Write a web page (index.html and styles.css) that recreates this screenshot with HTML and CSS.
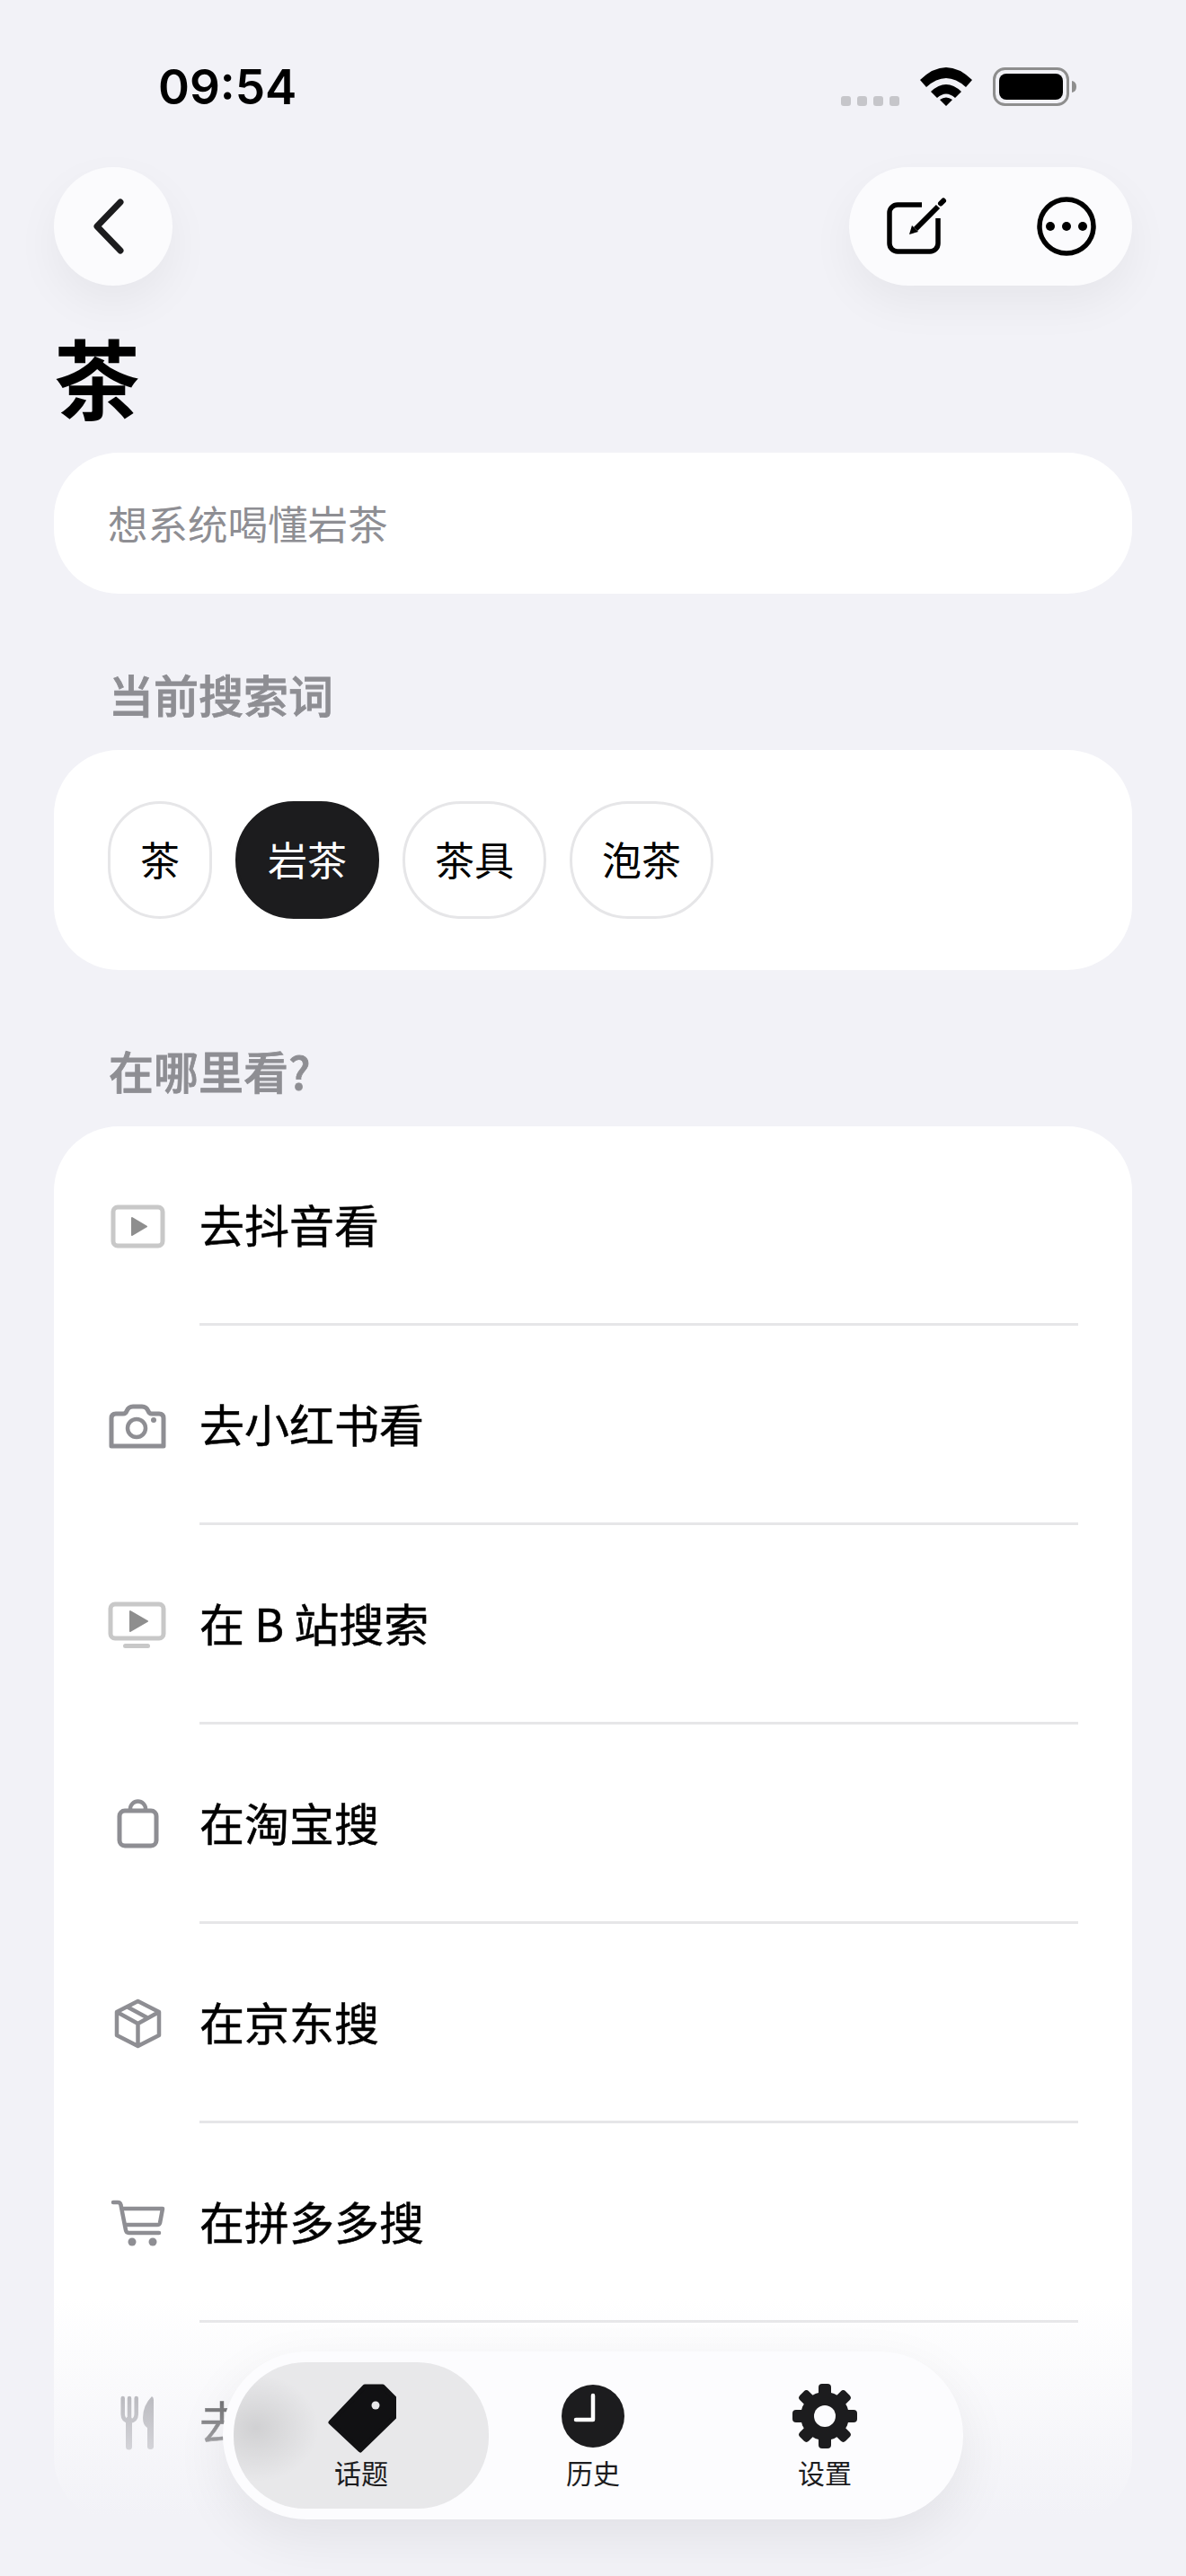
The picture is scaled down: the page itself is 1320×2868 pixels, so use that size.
FILE: index.html
```html
<!DOCTYPE html>
<html lang="zh-CN">
<head>
  <meta charset="UTF-8">
  <meta name="viewport" content="width=device-width, initial-scale=1.0">
  <title>茶</title>
  <link rel="stylesheet" href="styles.css">
</head>
<body>
  <div class="screen">
    <div class="status">
      <span class="time">09:54</span>
      <div class="status-icons">
        <div class="signal"><i></i><i></i><i></i><i></i></div>
        <svg class="wifi" width="58" height="43" viewBox="0 0 58 43">
          <path d="M0 14 Q29 -14 58 14 L51 22 Q29 2 7 22 Z M12 27 Q29 11 46 27 L39 34 Q29 25 19 34 Z M22 36 Q29 31 36 36 L29 43 Z" fill="#000"/>
        </svg>
        <svg class="battery" width="93" height="43" viewBox="0 0 93 43">
          <rect x="1.500" y="1.500" width="82" height="40" rx="12" fill="none" stroke="#8e8e8e" stroke-width="3"/>
          <rect x="7" y="7" width="71" height="29" rx="8" fill="#000"/>
          <path d="M88 15 q5 1 5 6.500 t-5 6.500 z" fill="#8e8e8e"/>
        </svg>
      </div>
    </div>

    <main class="content">
      <div class="nav">
        <button class="round-btn">
          <svg width="36" height="62" viewBox="0 0 36 62"><path d="M31 4 L5 31 L31 58" fill="none" stroke="#1c1c1e" stroke-width="7" stroke-linecap="round" stroke-linejoin="round"/></svg>
        </button>
        <div class="action-pill">
          <svg width="72" height="72" viewBox="0 0 72 72">
            <path d="M41 12 H14 a9 9 0 0 0 -9 9 V55 a9 9 0 0 0 9 9 H50 a9 9 0 0 0 9 -9 V27" fill="none" stroke="#000" stroke-width="5.500"/>
            <path d="M34 39 L59 14" stroke="#000" stroke-width="6"/>
            <path d="M62 10.500 L65 7.500" stroke="#000" stroke-width="6" stroke-linecap="round"/>
            <path d="M27 45 L30 35 L37 42 Z" fill="#000"/>
          </svg>
          <svg width="72" height="72" viewBox="0 0 72 72">
            <circle cx="36" cy="36" r="30" fill="none" stroke="#000" stroke-width="5.500"/>
            <circle cx="18" cy="36" r="5" fill="#000"/>
            <circle cx="36" cy="36" r="5" fill="#000"/>
            <circle cx="54" cy="36" r="5" fill="#000"/>
          </svg>
        </div>
      </div>

      <h1 class="title">茶</h1>

      <div class="search">想系统喝懂岩茶</div>

      <h2 class="section-label">当前搜索词</h2>
      <div class="card chips">
        <span class="chip">茶</span>
        <span class="chip active">岩茶</span>
        <span class="chip">茶具</span>
        <span class="chip">泡茶</span>
      </div>

      <h2 class="section-label">在哪里看?</h2>
      <div class="card list">
        <div class="row">
          <svg class="row-icon" viewBox="0 0 66 66">
            <rect x="6" y="12" width="55" height="43" rx="5" fill="none" stroke="#c8c8c8" stroke-width="5"/>
            <path d="M27 24 L43 33.500 L27 43 Z" fill="#8e8e8e" stroke="#8e8e8e" stroke-width="2" stroke-linejoin="round"/>
          </svg>
          <span class="row-text">去抖音看</span>
        </div>
        <div class="row">
          <svg class="row-icon" viewBox="0 0 66 66">
            <path d="M9 20 H17 Q20 20 21 17 Q23 12 28 12 H38 Q43 12 45 17 Q46 20 49 20 H57 Q62 20 62 25 V56 H4 V25 Q4 20 9 20 Z" fill="none" stroke="#8e8e93" stroke-width="5" stroke-linejoin="round"/>
            <circle cx="32" cy="36" r="10" fill="none" stroke="#8e8e93" stroke-width="4.500"/>
            <circle cx="51" cy="27" r="3" fill="#8e8e93"/>
          </svg>
          <span class="row-text">去小红书看</span>
        </div>
        <div class="row">
          <svg class="row-icon" viewBox="0 0 66 66">
            <rect x="3" y="10" width="59" height="38" rx="5" fill="none" stroke="#c8c8c8" stroke-width="5"/>
            <path d="M25 18 L44 29 L25 40 Z" fill="#8e8e8e" stroke="#8e8e8e" stroke-width="2" stroke-linejoin="round"/>
            <rect x="17" y="54" width="30" height="5" rx="2.500" fill="#c8c8c8"/>
          </svg>
          <span class="row-text">在 B 站搜索</span>
        </div>
        <div class="row">
          <svg class="row-icon" viewBox="0 0 66 66">
            <rect x="13" y="18" width="41" height="39" rx="6" fill="none" stroke="#8e8e93" stroke-width="5"/>
            <path d="M25 18 V16 a8.500 8.500 0 0 1 17 0 V18" fill="none" stroke="#8e8e93" stroke-width="4.500"/>
          </svg>
          <span class="row-text">在淘宝搜</span>
        </div>
        <div class="row">
          <svg class="row-icon" viewBox="0 0 66 66">
            <path d="M33.500 8 L57 20 V46 L33.500 58 L10 46 V20 Z M10 20 L33.500 33 L57 20 M33.500 33 V58 M21 14 L45 27" fill="none" stroke="#8e8e93" stroke-width="4.500" stroke-linejoin="round"/>
          </svg>
          <span class="row-text">在京东搜</span>
        </div>
        <div class="row">
          <svg class="row-icon" viewBox="0 0 66 66">
            <path d="M6 10 H11 Q14 10 14.500 13 L20 41 Q20.500 44 23.500 44 H57" fill="none" stroke="#8e8e93" stroke-width="4.500" stroke-linecap="round"/>
            <path d="M16 17 H61 L58 33 Q57.500 35 55 35 H19" fill="none" stroke="#8e8e93" stroke-width="4.500" stroke-linejoin="round"/>
            <circle cx="27" cy="54" r="4.500" fill="#8e8e93"/>
            <circle cx="50" cy="54" r="4.500" fill="#8e8e93"/>
          </svg>
          <span class="row-text">在拼多多搜</span>
        </div>
        <div class="row">
          <svg class="row-icon" viewBox="0 0 66 66">
            <path d="M16.700 6 V24 Q16.700 31 24 32 Q31.700 31 31.700 24 V6 M24 6 V32" fill="none" stroke="#8e8e93" stroke-width="4.500" stroke-linecap="round"/>
            <path d="M23.500 30 V60" fill="none" stroke="#8e8e93" stroke-width="7" stroke-linecap="round"/>
            <path d="M49 4 Q51 5 51 8 V60 Q51 63 47.500 63 Q44 63 44 60 V39 Q39 36 39 28 Q39 14 49 4 Z" fill="#8e8e93"/>
          </svg>
          <span class="row-text">去点评看</span>
        </div>
      </div>
    </main>

    <div class="fade"></div>

    <nav class="tabbar">
      <div class="tab active">
        <svg width="78" height="78" viewBox="-2 0 78 78">
          <path d="M41 3 H61 L75 17 V36 L36 74 L3 43 Z" fill="#111113" stroke="#111113" stroke-width="5" stroke-linejoin="round"/>
          <circle cx="53" cy="24" r="4.500" fill="#e8e8ea"/>
        </svg>
        <span>话题</span>
      </div>
      <div class="tab">
        <svg width="78" height="78" viewBox="0 0 78 78">
          <circle cx="39" cy="36" r="35" fill="#1c1c1e"/>
          <path d="M39 13 V40 H20" fill="none" stroke="#fff" stroke-width="4.500" stroke-linecap="round" stroke-linejoin="round"/>
        </svg>
        <span>历史</span>
      </div>
      <div class="tab">
        <svg width="78" height="78" viewBox="0 0 78 78">
          <g fill="#1c1c1e">
            <circle cx="39" cy="36" r="27"/>
            <rect x="32" y="0" width="14" height="72" rx="4"/>
            <rect x="32" y="0" width="14" height="72" rx="4" transform="rotate(45 39 36)"/>
            <rect x="32" y="0" width="14" height="72" rx="4" transform="rotate(90 39 36)"/>
            <rect x="32" y="0" width="14" height="72" rx="4" transform="rotate(135 39 36)"/>
          </g>
          <circle cx="39" cy="36" r="12" fill="#fcfcfe"/>
        </svg>
        <span>设置</span>
      </div>
    </nav>
  </div>
</body>
</html>
```

FILE: styles.css
```css
* {
  box-sizing: border-box;
}

body {
  margin: 0;
  background-color: #f2f2f7;
  font-family: "Noto Sans CJK SC", "Liberation Sans", sans-serif;
  color: #000;
}

.screen {
  position: relative;
  width: 1320px;
  height: 2868px;
  overflow: hidden;
}

/* status bar */
.status {
  display: flex;
  justify-content: space-between;
  align-items: flex-start;
  height: 186px;
  padding: 64px 122px 0 176px;
}

.time {
  font-family: Inter, "Liberation Sans", sans-serif;
  font-size: 53px;
  font-weight: 600;
  line-height: 66px;
}

.status-icons {
  display: flex;
  align-items: flex-end;
  gap: 23px;
  margin-top: 11px;
}

.signal {
  display: flex;
  gap: 7px;
}

.signal i {
  width: 11px;
  height: 11px;
  border-radius: 3px;
  background-color: #c6c6ca;
}

/* content */
.content {
  padding: 0 60px;
}

.nav {
  display: flex;
  justify-content: space-between;
}

.round-btn {
  display: flex;
  align-items: center;
  justify-content: center;
  width: 132px;
  height: 132px;
  padding: 0 10px 0 0;
  border: none;
  border-radius: 50%;
  background-color: #fbfbfd;
  box-shadow: 0 20px 50px rgba(0, 0, 0, 0.05);
}

.action-pill {
  display: flex;
  align-items: center;
  justify-content: space-between;
  width: 315px;
  height: 132px;
  padding: 0 37px 0 40px;
  border-radius: 66px;
  background-color: #fbfbfd;
  box-shadow: 0 20px 50px rgba(0, 0, 0, 0.05);
}

.title {
  margin: 52px 0 38px 0;
  font-size: 96px;
  font-weight: 700;
  line-height: 96px;
}

.search {
  display: flex;
  align-items: center;
  height: 157px;
  padding: 0 0 3px 60px;
  border-radius: 72px;
  background-color: #fff;
  font-size: 44.5px;
  color: #8e8e93;
}

.section-label {
  margin: 81px 0 33px 61px;
  font-size: 50px;
  font-weight: 500;
  line-height: 60px;
  color: #8e8e93;
  -webkit-text-stroke: 0.8px #8e8e93;
}

.card {
  border-radius: 72px;
  background-color: #fff;
}

.chips {
  display: flex;
  gap: 26px;
  height: 245px;
  padding: 57px 60px;
}

.chip {
  display: flex;
  align-items: center;
  height: 131px;
  padding: 0 33px 3px;
  border: 3px solid #e6e6e8;
  border-radius: 65px;
  font-size: 44px;
}

.chip.active {
  border-color: #1c1c1e;
  background-color: #1c1c1e;
  color: #fff;
}

.list {
  padding: 0 60px;
}

.row {
  display: flex;
  align-items: center;
  gap: 36px;
  height: 222px;
}

.row-icon {
  flex: none;
  width: 66px;
  height: 66px;
}

.row-text {
  display: flex;
  flex: 1;
  align-items: center;
  height: 100%;
  padding-bottom: 3px;
  border-bottom: 3px solid #e6e6e8;
  font-size: 50px;
  -webkit-text-stroke: 0.5px #000;
}

/* bottom overlay */
.fade {
  position: absolute;
  left: 0;
  right: 0;
  top: 2560px;
  bottom: 0;
  background: linear-gradient(rgba(242, 242, 247, 0), #f2f2f7 240px);
}

.tabbar {
  position: absolute;
  left: 248px;
  top: 2618px;
  display: grid;
  grid-template-columns: 284px 232px 284px;
  width: 824px;
  height: 187px;
  padding: 12px;
  border-radius: 94px;
  background-color: #fcfcfe;
  box-shadow: 0 20px 60px rgba(0, 0, 0, 0.07);
}

.tab {
  display: flex;
  flex-direction: column;
  align-items: center;
  gap: 2px;
  padding-top: 24px;
  border-radius: 80px;
  font-size: 30px;
  line-height: 36px;
  color: #1c1c1e;
}

.tab.active {
  background: radial-gradient(ellipse 70px 60px at 25px 45%, rgba(0, 0, 0, 0.1), transparent), #e8e8ea;
}
```
